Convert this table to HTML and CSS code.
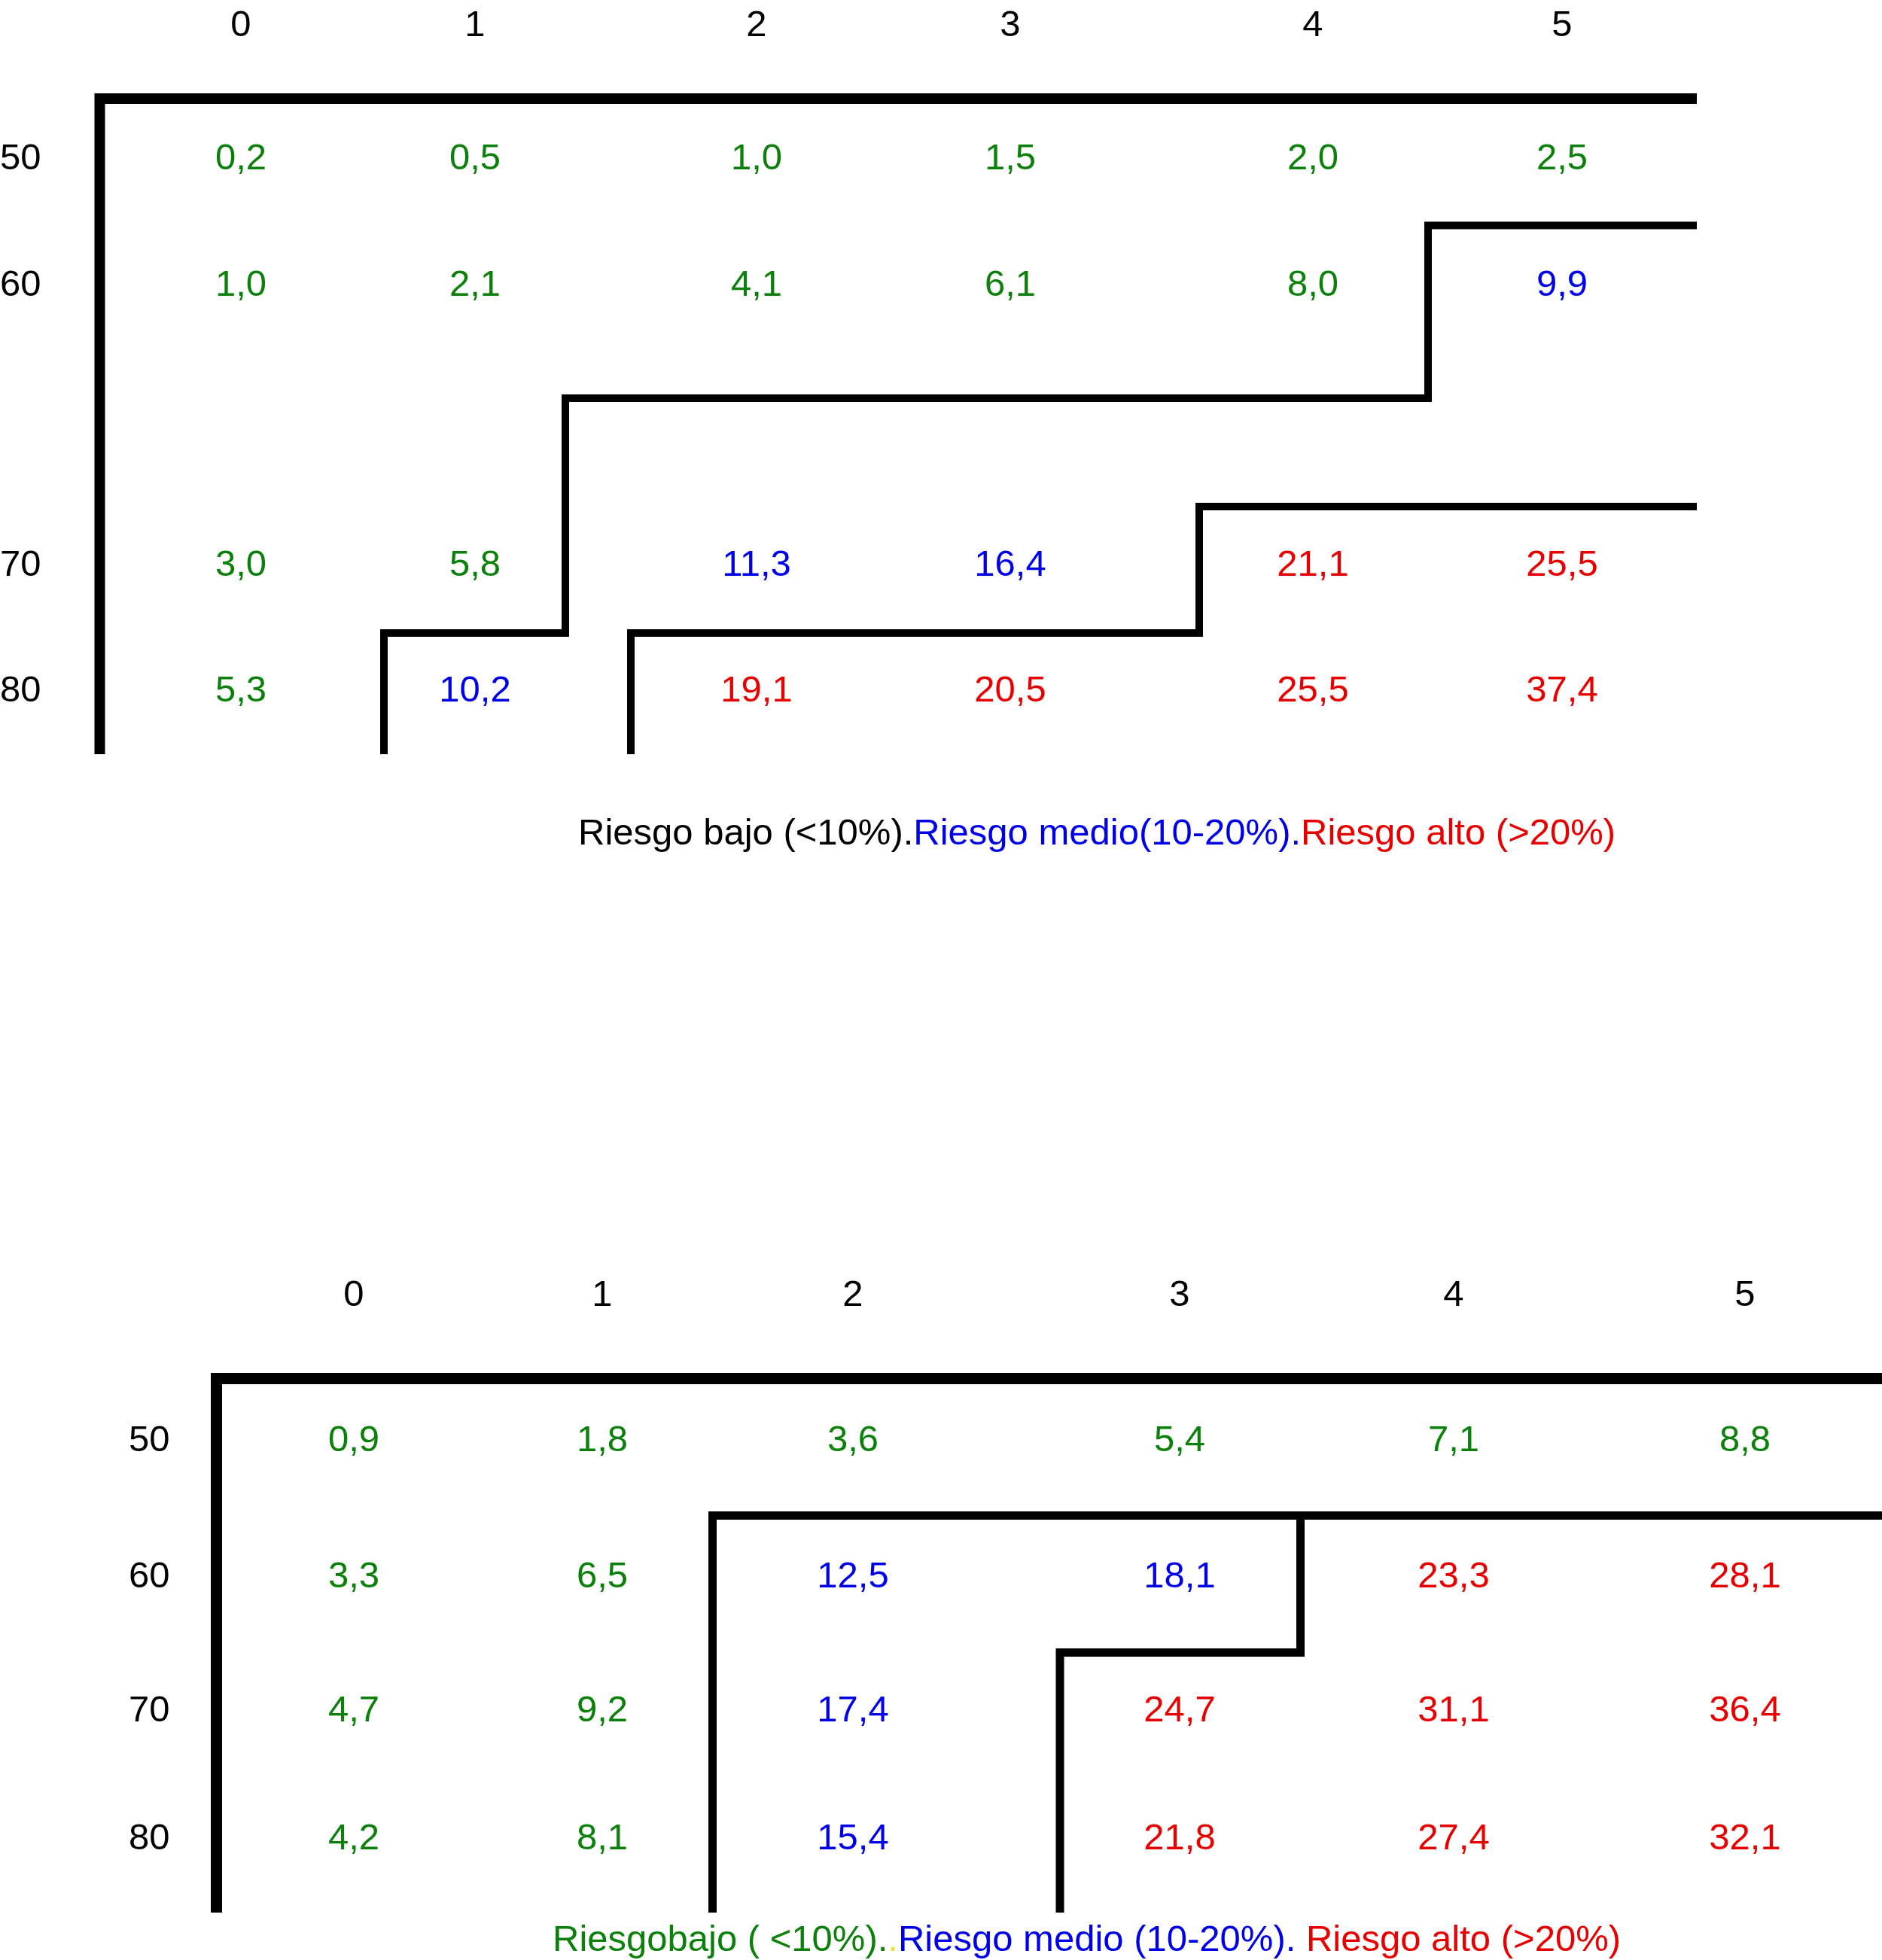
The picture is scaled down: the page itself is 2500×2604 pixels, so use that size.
FILE: index.html
```html
<!DOCTYPE html>
<html lang="es">
<head>
<meta charset="utf-8">
<title>Tablas de riesgo</title>
<link rel="stylesheet" href="styles.css">
</head>
<body>
<section class="chart chart-top">
  <svg class="lines" width="2500" height="1002" viewBox="0 0 2500 1002">
    <path class="thick" d="M2254 131 H132.5 V1002"/>
    <path class="thin" d="M2254 299.5 H1897 V529 H751 V841 H510 V1002"/>
    <path class="thin" d="M2254 673 H1593 V841 H838 V1002"/>
  </svg>
  <div class="row head r0">
    <span></span><span>0</span><span>1</span><span>2</span><span>3</span><span>4</span><span>5</span>
  </div>
  <div class="row r1">
    <span class="lab">50</span><span class="g">0,2</span><span class="g">0,5</span><span class="g">1,0</span><span class="g">1,5</span><span class="g">2,0</span><span class="g">2,5</span>
  </div>
  <div class="row r2">
    <span class="lab">60</span><span class="g">1,0</span><span class="g">2,1</span><span class="g">4,1</span><span class="g">6,1</span><span class="g">8,0</span><span class="b">9,9</span>
  </div>
  <div class="row r3">
    <span class="lab">70</span><span class="g">3,0</span><span class="g">5,8</span><span class="b">11,3</span><span class="b">16,4</span><span class="r">21,1</span><span class="r">25,5</span>
  </div>
  <div class="row r4">
    <span class="lab">80</span><span class="g">5,3</span><span class="b">10,2</span><span class="r">19,1</span><span class="r">20,5</span><span class="r">25,5</span><span class="r">37,4</span>
  </div>
</section>

<p class="legend legend-top"><span class="k">Riesgo bajo (&lt;10%).</span><span class="b">Riesgo medio(10-20%).</span><span class="r">Riesgo alto (&gt;20%)</span></p>

<section class="chart chart-bottom">
  <svg class="lines" width="2500" height="891" viewBox="0 0 2500 891">
    <path class="thick2" d="M2500 181.5 H287.5 V891"/>
    <path class="thin2" d="M2500 363.5 H946.5 V891"/>
    <path class="thin2" d="M1727.5 363.5 V545.5 H1408 V891"/>
  </svg>
  <div class="row head s0">
    <span></span><span>0</span><span>1</span><span>2</span><span>3</span><span>4</span><span>5</span>
  </div>
  <div class="row s1">
    <span class="lab">50</span><span class="g">0,9</span><span class="g">1,8</span><span class="g">3,6</span><span class="g">5,4</span><span class="g">7,1</span><span class="g">8,8</span>
  </div>
  <div class="row s2">
    <span class="lab">60</span><span class="g">3,3</span><span class="g">6,5</span><span class="b">12,5</span><span class="b">18,1</span><span class="r">23,3</span><span class="r">28,1</span>
  </div>
  <div class="row s3">
    <span class="lab">70</span><span class="g">4,7</span><span class="g">9,2</span><span class="b">17,4</span><span class="r">24,7</span><span class="r">31,1</span><span class="r">36,4</span>
  </div>
  <div class="row s4">
    <span class="lab">80</span><span class="g">4,2</span><span class="g">8,1</span><span class="b">15,4</span><span class="r">21,8</span><span class="r">27,4</span><span class="r">32,1</span>
  </div>
</section>

<p class="legend legend-bottom"><span class="g">Riesgobajo ( &lt;10%).</span><span class="y">.</span><span class="b">Riesgo medio (10-20%).</span><span class="r"> Riesgo alto (&gt;20%)</span></p>
</body>
</html>
```

FILE: styles.css
```css
html, body {
  margin: 0;
  padding: 0;
  background: #ffffff;
  overflow: hidden;
}

body {
  width: 2500px;
  height: 2604px;
  font-family: "Liberation Sans", Arial, Helvetica, sans-serif;
  font-size: 49px;
  color: #000000;
}

.chart {
  position: relative;
  display: flow-root;
}

.chart-top {
  height: 1002px;
}

.chart-bottom {
  height: 891px;
  margin-top: 515px;
}

.lines {
  position: absolute;
  top: 0;
  left: 0;
  overflow: visible;
}

.lines path {
  fill: none;
  stroke: #000000;
  stroke-linejoin: miter;
  stroke-linecap: butt;
}

.lines .thick { stroke-width: 14px; }
.lines .thin { stroke-width: 10px; }
.lines .thick2 { stroke-width: 15px; }
.lines .thin2 { stroke-width: 11px; }

.row {
  position: relative;
  display: grid;
  height: 60px;
  line-height: 60px;
  align-items: center;
  text-align: center;
  white-space: nowrap;
}

.chart-top .row {
  grid-template-columns: 200px 240px 382px 366px 308px 496px 166px;
}

.chart-bottom .row {
  grid-template-columns: 198px 544px 116px 550px 318px 410px 364px;
}

.row .lab {
  text-align: left;
}

.chart-bottom .row .lab {
  padding-left: 171px;
}

.r0 { margin-top: 1px; }
.r1 { margin-top: 117px; }
.r2 { margin-top: 108px; }
.r3 { margin-top: 312px; }
.r4 { margin-top: 107px; }

.s0 { margin-top: 38px; }
.s1 { margin-top: 133px; }
.s2 { margin-top: 121px; }
.s3 { margin-top: 118px; }
.s4 { margin-top: 110px; }

.legend {
  margin: 0;
  white-space: nowrap;
  line-height: 60px;
}

.legend-top {
  margin-top: 73px;
  padding-left: 768px;
}

.legend-bottom {
  margin-top: 6px;
  padding-left: 734px;
  line-height: 56px;
}

.k { color: #000000; }
.g { color: #0b800b; }
.b { color: #0000e8; }
.r { color: #e80000; }
.y { color: #e8e040; }
```
